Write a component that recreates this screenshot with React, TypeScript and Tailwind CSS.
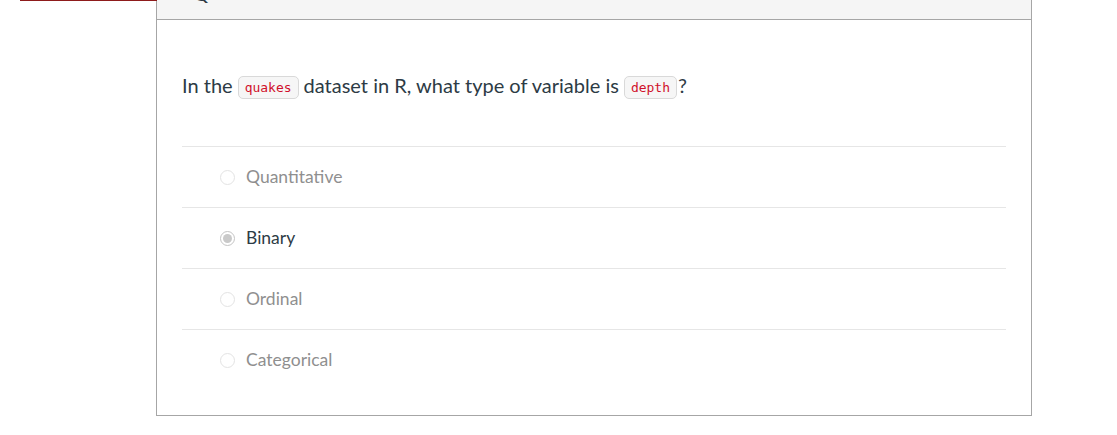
import React from "react";

const answers = [
  { label: "Quantitative", selected: false },
  { label: "Binary", selected: true },
  { label: "Ordinal", selected: false },
  { label: "Categorical", selected: false },
];

function Code({ children, tight }: { children: React.ReactNode; tight?: boolean }) {
  return (
    <code
      className={
        tight
          ? "ml-[5px] mr-[1px] inline-block rounded-[5px] border border-[#d9d9d9] bg-[#f6f6f6] px-[6px] py-[2px] align-[1px] font-['DejaVu_Sans_Mono',monospace] text-[13px] leading-[17px] text-[#d0112b]"
          : "mx-[5px] inline-block rounded-[5px] border border-[#d9d9d9] bg-[#f6f6f6] px-[6px] py-[2px] align-[1px] font-['DejaVu_Sans_Mono',monospace] text-[13px] leading-[17px] text-[#d0112b]"
      }
    >
      {children}
    </code>
  );
}

function Radio({ selected }: { selected: boolean }) {
  return selected ? (
    <span className="flex h-[15px] w-[15px] items-center justify-center rounded-full border border-[#c4c4c4] bg-white">
      <span className="h-[9px] w-[9px] rounded-full bg-[#c9c9c9]" />
    </span>
  ) : (
    <span className="h-[15px] w-[15px] rounded-full border border-[#e3e3e3] bg-white" />
  );
}

export default function App() {
  return (
    <div className="relative h-[435px] w-[1117px] overflow-hidden bg-white font-['Lato','Noto_Sans',sans-serif]">
      {/* underline of the element cut off above */}
      <div className="absolute left-[20px] top-0 h-[1px] w-[144px] bg-[#8e1b1b]" />

      <div className="ml-[156px] w-[876px] border-x border-b border-[#a6a6a6]">
        {/* header strip */}
        <div className="relative h-[20px] border-b border-[#a6a6a6] bg-[#f5f5f5]">
          <span className="absolute left-[38px] top-[-15px] text-[16px] font-bold leading-[20px] text-[#2d3b45]">Q</span>
        </div>

        <div className="px-[25px] pb-[25px] pt-[52px]">
          <p className="text-[20px] leading-[27px] text-[#2d3b45]">
            In the<Code>quakes</Code>dataset in R, what type of variable is<Code tight>depth</Code>?
          </p>

          <div className="mt-[47px]">
            {answers.map((a) => (
              <div
                key={a.label}
                className="flex h-[61px] items-center border-t border-[#e6e6e6] pl-[38px]"
              >
                <div className="flex items-center">
                  <Radio selected={a.selected} />
                  <span
                    className={
                      a.selected
                        ? "ml-[11px] text-[17.5px] text-[#2d3b45]"
                        : "ml-[11px] text-[17.5px] text-[#8f8f8f]"
                    }
                  >
                    {a.label}
                  </span>
                </div>
              </div>
            ))}
          </div>
        </div>
      </div>
    </div>
  );
}
